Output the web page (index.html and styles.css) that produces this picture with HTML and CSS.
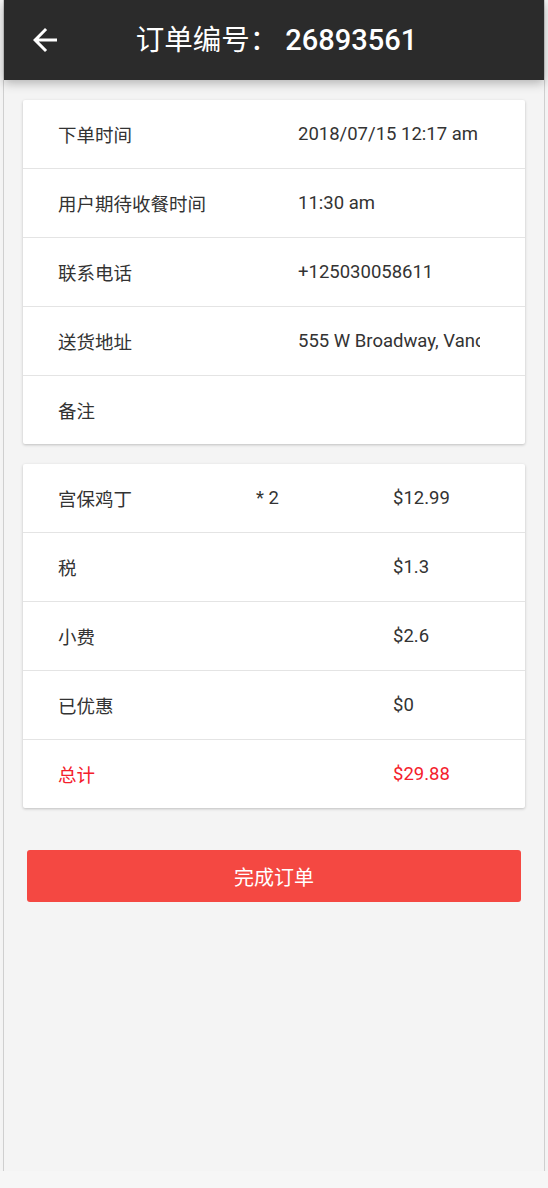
FILE: index.html
```html
<!DOCTYPE html>
<html lang="zh">
<head>
<meta charset="utf-8">
<title>订单详情</title>
<link rel="stylesheet" href="styles.css">
</head>
<body>
<div class="device">
  <header class="topbar">
    <button class="back" aria-label="返回">
      <svg width="36" height="36" viewBox="0 0 24 24"><path fill="#fff" d="M20 11H7.83l5.59-5.59L12 4l-8 8 8 8 1.41-1.41L7.83 13H20v-2z"/></svg>
    </button>
    <h1 class="title">订单编号： <span class="num">26893561</span></h1>
    <span class="spacer"></span>
  </header>
  <main class="content">
    <section class="card info">
      <div class="irow"><div class="lbl">下单时间</div><div class="val"><span>2018/07/15 12:17 am</span></div></div>
      <div class="irow"><div class="lbl">用户期待收餐时间</div><div class="val"><span>11:30 am</span></div></div>
      <div class="irow"><div class="lbl">联系电话</div><div class="val"><span>+125030058611</span></div></div>
      <div class="irow"><div class="lbl">送货地址</div><div class="val"><span>555 W Broadway, Vancouver, BC</span></div></div>
      <div class="irow"><div class="lbl">备注</div><div class="val"><span></span></div></div>
    </section>
    <section class="card bill">
      <div class="brow"><div>宫保鸡丁</div><div>* 2</div><div>$12.99</div></div>
      <div class="brow"><div>税</div><div></div><div>$1.3</div></div>
      <div class="brow"><div>小费</div><div></div><div>$2.6</div></div>
      <div class="brow"><div>已优惠</div><div></div><div>$0</div></div>
      <div class="brow total"><div>总计</div><div></div><div>$29.88</div></div>
    </section>
    <button class="done">完成订单</button>
  </main>
</div>
</body>
</html>
```

FILE: styles.css
```css
* { box-sizing: border-box; }
html, body { margin: 0; padding: 0; }
body {
  background: #f6f6f6;
  font-family: Roboto, "Noto Sans CJK SC", sans-serif;
  color: #333;
}
.device {
  margin-left: 3px;
  width: 542px;
  height: 1171px;
  background: #f4f4f4;
  border-left: 1px solid #cfcfcf;
  border-right: 1px solid #cfcfcf;
  box-shadow: 0 6px 12px rgba(0,0,0,0.03);
  position: relative;
}
.topbar {
  height: 80px;
  background: #2b2b2b;
  display: flex;
  align-items: center;
  box-shadow: 0 3px 10px rgba(0,0,0,0.28);
  position: relative;
  z-index: 1;
}
.back {
  width: 36px;
  height: 36px;
  margin-left: 23px;
  padding: 0;
  border: 0;
  background: none;
  display: flex;
}
.spacer { width: 54px; }
.title {
  flex: 1;
  margin: 0;
  text-align: center;
  color: #fff;
  font-size: 28.5px;
  font-weight: 400;
  line-height: 36px;
  white-space: pre;
}
.title .num { font-weight: 500; font-size: 29px; }
.content { padding: 20px 19px 0; }
.card {
  background: #fff;
  border-radius: 2px;
  box-shadow: 0 1px 3px rgba(0,0,0,0.22);
  margin-bottom: 20px;
}
.irow {
  display: grid;
  grid-template-columns: 234px 1fr;
  height: 69px;
  font-size: 18.5px;
}
.irow .lbl, .irow .val {
  display: flex;
  align-items: center;
  border-bottom: 1px solid #e4e4e4;
}
.irow .lbl { padding-left: 35px; }
.irow .val { padding-left: 41px; padding-right: 45px; overflow: hidden; }
.irow .val span { white-space: nowrap; overflow: hidden; display: block; }
.irow:last-child { height: 68px; }
.irow:last-child .lbl, .irow:last-child .val { border-bottom: 0; }
.brow {
  display: grid;
  grid-template-columns: 198px 137px 1fr;
  padding-left: 35px;
  height: 69px;
  align-items: center;
  font-size: 18.5px;
  border-bottom: 1px solid #e4e4e4;
}
.brow:last-child { border-bottom: 0; height: 68px; }
.brow.total { color: #f4202c; }
.done {
  display: block;
  width: 494px;
  height: 52px;
  margin: 42px auto 0;
  border: 0;
  border-radius: 3px;
  background: #f44842;
  color: #fff;
  font-family: Roboto, "Noto Sans CJK SC", sans-serif;
  font-size: 20px;
}
```
